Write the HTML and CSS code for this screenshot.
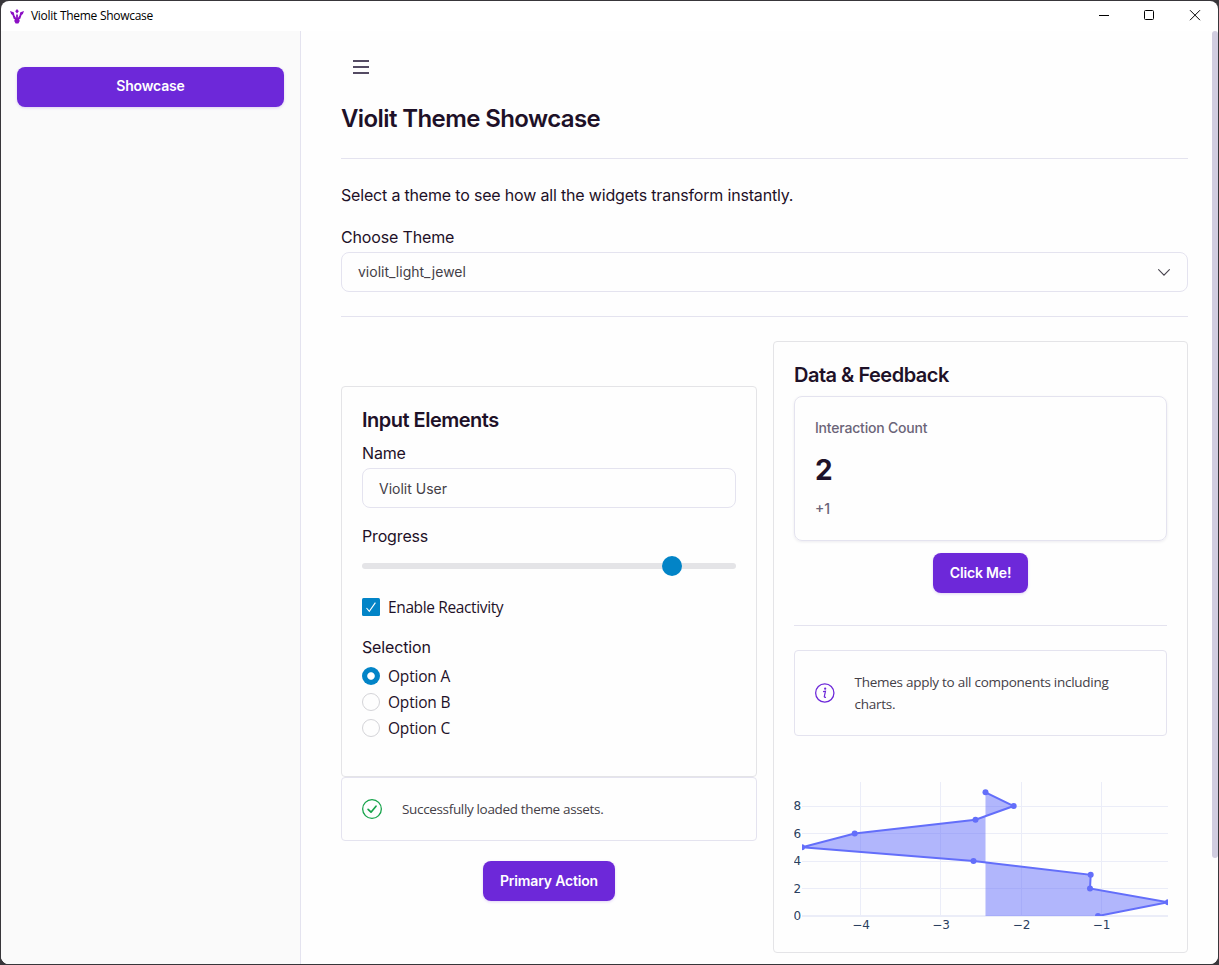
FILE: index.html
```html
<!DOCTYPE html>
<html lang="en">
<head>
<meta charset="utf-8">
<title>Violit Theme Showcase</title>
<link rel="stylesheet" href="styles.css">
</head>
<body>
<div class="window">
  <header class="titlebar">
    <svg class="logo" width="14" height="15" viewBox="0 0 14 15" fill="#8b0fc4">
      <path d="M0 1.9 3.7 3.3 4.5 6.4 6.1 8.9V5.6H7.9V8.9L9.5 6.4 10.3 3.3 14 1.9 12.9 5 11.6 6 10.3 9.8 8.9 10.8 9.9 11.8 8.4 14.4H5.6L4.1 11.8 5.1 10.8 3.7 9.8 2.4 6 1.1 5Z"/>
      <path d="M7 .1 8.8 2.3 7 4.6 5.2 2.3Z"/>
    </svg>
    <span class="app-name">Violit Theme Showcase</span>
    <svg class="controls" width="120" height="30" viewBox="0 0 120 30" fill="none" stroke="#000">
      <path d="M9 14.5h10"/>
      <rect x="54.5" y="9.5" width="9" height="9" rx="1"/>
      <path d="M100 9.2l10 10M110 9.2l-10 10"/>
    </svg>
  </header>
  <div class="body">
    <nav class="sidebar"><a class="btn nav-btn">Showcase</a></nav>
    <main class="main">
      <div class="menu">
        <svg width="16" height="14" viewBox="0 0 16 14" fill="#544b63"><path d="M0 0h16v2H0zM0 6h16v2H0zM0 12h16v2H0z"/></svg>
      </div>
      <h1>Violit Theme Showcase</h1>
      <hr>
      <p class="intro">Select a theme to see how all the widgets transform instantly.</p>
      <div class="label">Choose Theme</div>
      <div class="field select">
        <span>violit_light_jewel</span>
        <svg width="12" height="7" viewBox="0 0 12 7" fill="none" stroke="#49454f" stroke-width="1.1" stroke-linecap="round"><path d="M.6.7 6 6.1 11.4.7"/></svg>
      </div>
      <hr>
      <div class="columns">
        <div class="col-left">
          <section class="card inputs">
            <h2>Input Elements</h2>
            <div class="label name-label">Name</div>
            <div class="field">Violit User</div>
            <div class="label progress-label">Progress</div>
            <div class="slider"><i class="thumb"></i></div>
            <div class="choice check-row">
              <svg width="18" height="18" viewBox="0 0 18 18"><rect width="18" height="18" rx="1.5" fill="#0284c7"/><path d="M4.5 10 7.3 13.3 13.4 4.6" fill="none" stroke="#fff" stroke-width="1.1"/></svg>
              <span>Enable Reactivity</span>
            </div>
            <div class="label select-label">Selection</div>
            <div class="radios">
              <div class="choice"><i class="radio on"></i><span>Option A</span></div>
              <div class="choice"><i class="radio"></i><span>Option B</span></div>
              <div class="choice"><i class="radio"></i><span>Option C</span></div>
            </div>
          </section>
          <div class="alert success">
            <svg width="20" height="20" viewBox="0 0 20 20" fill="none" stroke="#16a34a"><circle cx="10" cy="10" r="9.35" stroke-width="1.3"/><path d="M6.1 10.4 9 13.2 14 7.2" stroke-width="1.7" stroke-linecap="round" stroke-linejoin="round"/></svg>
            <span>Successfully loaded theme assets.</span>
          </div>
          <a class="btn primary">Primary Action</a>
        </div>
        <section class="card data">
          <h2>Data &amp; Feedback</h2>
          <div class="metric">
            <div class="metric-label">Interaction Count</div>
            <div class="metric-value">2</div>
            <div class="metric-delta">+1</div>
          </div>
          <a class="btn click">Click Me!</a>
          <hr>
          <div class="alert info">
            <svg width="20" height="20" viewBox="0 0 20 20" fill="none" stroke="#6d28d9"><circle cx="10" cy="10" r="9.35" stroke-width="1.3"/><path d="M8.2 8.5 10.7 8.1 9.5 13.6Q9.4 14.8 11.2 14.2" stroke-width="1.25"/><circle cx="10.4" cy="5.6" r="1.15" fill="#6d28d9" stroke="none"/></svg>
            <span>Themes apply to all components including charts.</span>
          </div>
          <svg class="chart" width="374" height="156" viewBox="794 780 374 156">
            <defs><clipPath id="plot"><rect x="802" y="782" width="366" height="134"/></clipPath></defs>
            <path class="grid" d="M860.5 782v134M940.5 782v134M1021.5 782v134M1101.5 782v134M802 806.5h366M802 833.5h366M802 861.5h366M802 888.5h366"/>
            <path class="zero" d="M802 916h366"/>
            <g clip-path="url(#plot)">
              <path class="area" d="M1098 916 1168 902.3 1090 888.5 1090.7 874.8 973.5 861 802 847.3 854.7 833.5 975.5 819.8 1013.7 806 985.5 792.3V916Z"/>
              <path class="line" d="M1098 916 1168 902.3 1090 888.5 1090.7 874.8 973.5 861 802 847.3 854.7 833.5 975.5 819.8 1013.7 806 985.5 792.3"/>
              <g class="dots">
                <circle cx="1098" cy="916" r="3"/><circle cx="1168" cy="902.3" r="3"/><circle cx="1090" cy="888.5" r="3"/><circle cx="1090.7" cy="874.8" r="3"/><circle cx="973.5" cy="861" r="3"/><circle cx="802" cy="847.3" r="3"/><circle cx="854.7" cy="833.5" r="3"/><circle cx="975.5" cy="819.8" r="3"/><circle cx="1013.7" cy="806" r="3"/><circle cx="985.5" cy="792.3" r="3"/>
              </g>
            </g>
            <g class="ticks">
              <text x="793.5" y="810">8</text><text x="793.5" y="838">6</text><text x="793.5" y="865">4</text><text x="793.5" y="893">2</text><text x="793.5" y="920">0</text>
              <g text-anchor="middle"><text x="861" y="929">−4</text><text x="941" y="929">−3</text><text x="1021.5" y="929">−2</text><text x="1101.5" y="929">−1</text></g>
            </g>
          </svg>
        </section>
      </div>
    </main>
    <div class="scrollbar"></div>
  </div>
</div>
</body>
</html>
```
FILE: styles.css
```css
* { box-sizing: border-box; }
body {
  margin: 0;
  height: 965px;
  padding: 1px;
  background: #38363a;
  overflow: hidden;
  font-family: Inter, sans-serif;
  font-size: 16px;
  color: #1e1128;
}
.window {
  height: 963px;
  display: flex;
  flex-direction: column;
  background: #fff;
  border-radius: 8px;
  overflow: hidden;
}
.titlebar {
  height: 30px;
  flex: none;
  display: flex;
  align-items: center;
  padding-left: 9px;
}
.app-name {
  margin-left: 7px;
  padding-bottom: 1px;
  font: 12px "Open Sans", sans-serif;
  letter-spacing: -0.28px;
  color: #000;
}
.controls { margin-left: auto; margin-right: 8px; }
.body { flex: 1; display: flex; min-height: 0; background: #fefefe; }
.sidebar {
  width: 300px;
  flex: none;
  padding: 36px 16px;
  background: #fafafa;
  border-right: 1px solid #e4e3ef;
}
.main {
  flex: 1;
  min-width: 0;
  padding: 16px 24px 0 40px;
}
.scrollbar {
  width: 6px;
  height: 827px;
  flex: none;
  border-radius: 3px;
  background: #d1cde0;
}
.btn {
  display: flex;
  align-items: center;
  justify-content: center;
  height: 40px;
  padding-bottom: 1px;
  border-radius: 8px;
  background: #6d28d9;
  color: #fff;
  font-size: 14px;
  font-weight: 600;
  letter-spacing: -0.17px;
  box-shadow: 0 1px 3px rgba(109, 40, 217, 0.2);
}
.nav-btn { padding-bottom: 3px; }
.menu {
  height: 40px;
  display: flex;
  align-items: center;
  padding-left: 12px;
}
h1 {
  margin: 16px 0 23px;
  font-size: 24px;
  line-height: 32px;
  font-weight: 600;
  letter-spacing: -0.6px;
}
h2 {
  margin: 0;
  font-size: 20px;
  line-height: 26px;
  font-weight: 600;
  letter-spacing: -0.5px;
}
hr {
  height: 1px;
  margin: 0;
  border: 0;
  background: #e4e3ef;
}
.intro { margin: 24px 0 18px; line-height: 24px; letter-spacing: -0.18px; }
.label { line-height: 24px; margin-bottom: 3px; letter-spacing: -0.15px; }
.field {
  display: flex;
  align-items: center;
  height: 40px;
  padding: 0 17px 0 16px;
  border: 1px solid #e4e3ef;
  border-radius: 8px;
  font-size: 14px;
  color: #444047;
}
.select { justify-content: space-between; margin-bottom: 24px; }
.select span { padding-bottom: 2px; }
.columns {
  display: grid;
  grid-template-columns: 416px 415px;
  column-gap: 16px;
  margin-top: 24px;
}
.col-left { padding-top: 45px; }
.card {
  border: 1px solid #e4e4e7;
  border-radius: 4px;
  padding: 20px;
}
.inputs { height: 391px; }
.name-label { margin-top: 8px; }
.progress-label { margin-top: 16px; margin-bottom: 0; }
.slider {
  position: relative;
  height: 6px;
  margin-top: 15px;
  border-radius: 3px;
  background: #e4e4e7;
}
.thumb {
  position: absolute;
  left: 300px;
  top: -7px;
  width: 20px;
  height: 20px;
  border-radius: 50%;
  background: #0284c7;
}
.choice {
  display: flex;
  align-items: center;
  gap: 8px;
  height: 26px;
  font-family: "Open Sans", sans-serif;
  font-size: 15.5px;
  letter-spacing: -0.2px;
}
.check-row { margin-top: 25px; letter-spacing: -0.37px; }
.select-label { margin: 15px 0 4px; }
.radio {
  width: 18px;
  height: 18px;
  border: 1px solid #d4d4d8;
  border-radius: 50%;
}
.radio.on {
  border: 0;
  background: radial-gradient(circle, #fff 3.3px, #0284c7 4.2px);
}
.alert {
  display: flex;
  align-items: center;
  gap: 20px;
  height: 64px;
  padding: 0 20px;
  border: 1px solid #e4e3ef;
  border-radius: 4px;
  font-family: "Open Sans", sans-serif;
  font-size: 13.5px;
  line-height: 22px;
  letter-spacing: -0.27px;
  color: #444047;
}
.success { letter-spacing: -0.34px; }
.primary { width: 132px; margin: 20px auto 0; }
.data { height: 612px; }
.metric {
  height: 145px;
  margin-top: 8px;
  padding: 20px;
  border: 1px solid #e4e3ef;
  border-radius: 8px;
  box-shadow: 0 1px 3px rgba(30, 17, 60, 0.08);
}
.metric-label { font-size: 14px; font-weight: 500; line-height: 22px; letter-spacing: -0.2px; color: #6b6478; }
.metric-value { margin-top: 11px; font-size: 28px; font-weight: 700; line-height: 40px; }
.metric-delta { margin-top: 9px; font-size: 14px; font-weight: 500; line-height: 20px; color: #6b6478; }
.click { width: 95px; margin: 12px auto 32px; }
.info { height: 86px; margin-top: 24px; }
.chart { display: block; margin-top: 44px; }
.grid { stroke: #ebedf8; }
.zero { stroke: #ebedf8; stroke-width: 2; }
.area { fill: #636efa; fill-opacity: 0.5; }
.line { fill: none; stroke: #636efa; stroke-width: 2; }
.dots { fill: #636efa; }
.ticks { font-family: "DejaVu Sans", sans-serif; font-size: 12px; fill: #2a3f5f; }
```
